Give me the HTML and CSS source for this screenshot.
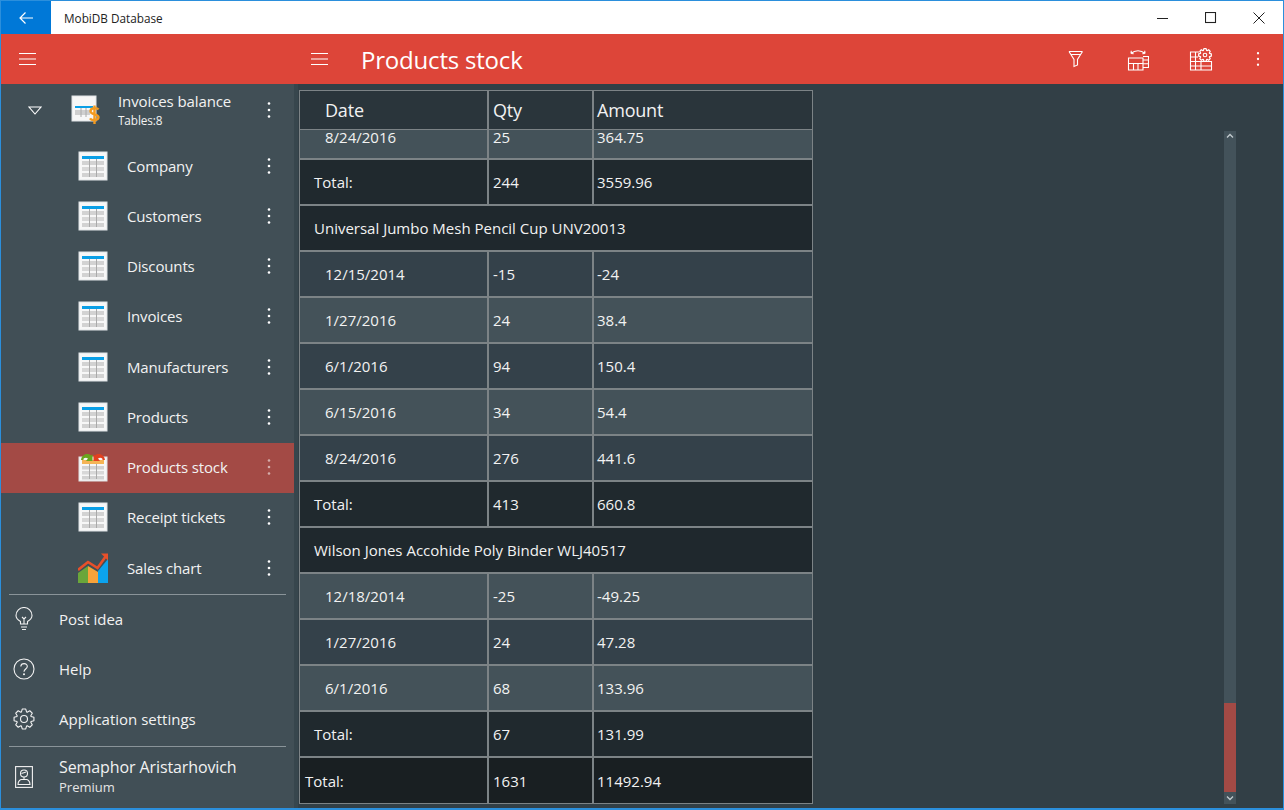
FILE: index.html
```html
<!DOCTYPE html>
<html lang="en">
<head>
<meta charset="utf-8">
<title>MobiDB Database</title>
<link rel="stylesheet" href="styles.css">
</head>
<body>
<svg class="defs" width="0" height="0" aria-hidden="true">
  <symbol id="dots" viewBox="0 0 4 18"><circle cx="2" cy="2.500" r="1.300"/><circle cx="2" cy="9" r="1.300"/><circle cx="2" cy="15.500" r="1.300"/></symbol>
  <symbol id="burger" viewBox="0 0 17 14"><path d="M0 1.500h17M0 7h17M0 12.500h17" fill="none" stroke="currentColor" stroke-width="1.200"/></symbol>
  <symbol id="tbl" viewBox="0 0 30 30">
    <rect x="1" y="1" width="28" height="28" fill="#f7f7f7" stroke="#dfe3e5"/>
    <rect x="4" y="5" width="22" height="3" fill="#0a9fe6"/>
    <rect x="4" y="10" width="22" height="4" fill="#d2d2d2"/>
    <rect x="4" y="16" width="22" height="4" fill="#d8d8d8"/>
    <rect x="4" y="22" width="22" height="4" fill="#d2d2d2"/>
    <path d="M11.500 8v18M18.500 8v18" stroke="#aaa" stroke-width="1"/>
  </symbol>
  <symbol id="gear" viewBox="0 0 24 24"><path fill="none" stroke-linejoin="round" d="M9.200 4.290 10.090 1.170H13.910L14.800 4.290 15.470 4.570 18.310 2.990 21.010 5.690 19.430 8.530 19.710 9.200 22.830 10.090V13.910L19.710 14.800 19.430 15.470 21.010 18.310 18.310 21.010 15.470 19.430 14.800 19.710 13.910 22.830H10.090L9.200 19.710 8.530 19.430 5.690 21.010 2.990 18.310 4.570 15.470 4.290 14.800 1.170 13.910V10.090L4.290 9.200 4.570 8.530 2.990 5.690 5.690 2.990 8.530 4.570Z"/></symbol>
</svg>
<div class="window">
  <header class="titlebar">
    <button class="back"><svg width="16" height="14" viewBox="0 0 16 14"><path d="M15 7H2M7.500 1.500 2 7l5.500 5.500" fill="none" stroke="#fff" stroke-width="1.200"/></svg></button>
    <span class="apptitle">MobiDB Database</span>
    <div class="winctl">
      <svg width="12" height="12" viewBox="0 0 12 12"><path d="M0 6.500h11" stroke="#222" stroke-width="1"/></svg>
      <svg width="12" height="12" viewBox="0 0 12 12"><rect x=".5" y=".5" width="10" height="10" fill="none" stroke="#222" stroke-width="1.100"/></svg>
      <svg width="12" height="12" viewBox="0 0 12 12"><path d="M.5.500l11 11M11.500.500l-11 11" stroke="#222" stroke-width="1"/></svg>
    </div>
  </header>
  <div class="toolbar">
    <div class="tb-left"><svg class="burger"><use href="#burger"/></svg></div>
    <div class="tb-main">
      <svg class="burger"><use href="#burger"/></svg>
      <h1 class="pagetitle">Products stock</h1>
      <div class="tb-actions">
        <svg width="18" height="20" viewBox="0 0 18 20" fill="none" stroke="#fff" stroke-width="1.100"><path d="M2 2.500h13.500M2 2.500l5 8v7l3.500-1.500v-5.500l5-8M3.800 5.500h10"/></svg>
        <svg class="swap" width="22" height="23" viewBox="0 0 22 23" fill="none" stroke="#fff" stroke-width="1.100"><path d="M4 5.500C8 1.800 14 1.800 18 5.500M4 5.500l.3-2.700M4 5.500l2.700.2M18 5.500l-.3-2.700M18 5.500l-2.700.2"/><path d="M1.500 10h14.500v12H1.500zM1.500 15.500H16M6.500 15.500V22M11 15.500V22M16 8.500H21.500v11H16M16 12h5.500M16 15.800h5.500"/></svg>
        <svg class="tblgear" width="24" height="23" viewBox="0 0 24 23" fill="none" stroke="#fff" stroke-width="1.100"><path d="M10 4H1.500v18h21v-9M1.500 9H9M1.500 13.500h21M1.500 18h21M6.500 4v18M12 13.500V22"/><use href="#gear" x="9" y="0" width="14" height="14" stroke-width="2.100"/><circle cx="16" cy="7" r="1.800"/></svg>
        <svg class="dots"><use href="#dots"/></svg>
      </div>
    </div>
  </div>
  <div class="content">
    <aside class="sidebar">
      <div class="db">
        <svg class="caret" width="14" height="9" viewBox="0 0 14 9"><path d="M1 1h12L7 8z" fill="none" stroke="#fff" stroke-width="1.100"/></svg>
        <svg class="dbicon" width="30" height="30" viewBox="0 0 30 30">
          <rect x="1" y="1" width="24" height="25" fill="#f7f7f7" stroke="#dfe3e5"/>
          <rect x="4" y="11" width="18" height="2" fill="#0a9fe6"/>
          <rect x="4" y="15" width="15" height="5" fill="#cfcfcf"/>
          <path d="M10 13v9M15 13v9" stroke="#aaa"/>
          <path d="M27.500 14.500c-1.500-2-8-2-8 1.800s8 2.500 8 6c0 3.500-7 3.500-8.500 1M23.500 10.500v18.500" fill="none" stroke="#f39a1f" stroke-width="2.400"/>
        </svg>
        <div class="dbtext"><div class="dbname">Invoices balance</div><div class="dbsub">Tables:8</div></div>
        <svg class="dots"><use href="#dots"/></svg>
      </div>
      <nav class="tables">
        <div class="item"><svg class="ticon"><use href="#tbl"/></svg><span class="label">Company</span><svg class="dots"><use href="#dots"/></svg></div>
        <div class="item"><svg class="ticon"><use href="#tbl"/></svg><span class="label">Customers</span><svg class="dots"><use href="#dots"/></svg></div>
        <div class="item"><svg class="ticon"><use href="#tbl"/></svg><span class="label">Discounts</span><svg class="dots"><use href="#dots"/></svg></div>
        <div class="item"><svg class="ticon"><use href="#tbl"/></svg><span class="label">Invoices</span><svg class="dots"><use href="#dots"/></svg></div>
        <div class="item"><svg class="ticon"><use href="#tbl"/></svg><span class="label">Manufacturers</span><svg class="dots"><use href="#dots"/></svg></div>
        <div class="item"><svg class="ticon"><use href="#tbl"/></svg><span class="label">Products</span><svg class="dots"><use href="#dots"/></svg></div>
        <div class="item selected">
          <svg class="ticon" viewBox="0 0 30 30">
            <rect x="1" y="5" width="28" height="24" fill="#f7f7f7" stroke="#dfe3e5"/>
            <rect x="4" y="8" width="22" height="4" fill="#f5b455"/>
            <rect x="4" y="14" width="22" height="3.500" fill="#d2d2d2"/>
            <rect x="4" y="19" width="22" height="3.500" fill="#d8d8d8"/>
            <rect x="4" y="24" width="22" height="3.500" fill="#d2d2d2"/>
            <path d="M11.500 12v15M18.500 12v15" stroke="#aaa"/>
            <path d="M3 8c.5-5 6-8 10-4.500l1.500-1V9H8l2-2.500C8 5 5 6 5.500 8z" fill="#6aa51e"/>
            <path d="M27 8c-.5-5-6-8-10-4.500l-1.500-1V9H22l-2-2.500C22 5 25 6 24.500 8z" fill="#e2401f"/>
          </svg>
          <span class="label">Products stock</span><svg class="dots"><use href="#dots"/></svg>
        </div>
        <div class="item"><svg class="ticon"><use href="#tbl"/></svg><span class="label">Receipt tickets</span><svg class="dots"><use href="#dots"/></svg></div>
        <div class="item">
          <svg class="ticon" viewBox="0 0 30 30">
            <path d="M0 20 10 13v17H0z" fill="#6aa63a"/>
            <path d="M10 13l10 6V30H10z" fill="#f7a33a"/>
            <path d="M20 18 30 6v24H20z" fill="#0ba3ee"/>
            <path d="M0 17 10 9l9.500 6L28 3" fill="none" stroke="#e8502a" stroke-width="2.600"/>
            <path d="M23 .5h7v7z" fill="#e8502a"/>
          </svg>
          <span class="label">Sales chart</span><svg class="dots"><use href="#dots"/></svg>
        </div>
      </nav>
      <div class="links">
        <div class="link">
          <svg class="licon" width="20" height="24" viewBox="0 0 20 24" fill="none" stroke="#f2f2f2" stroke-width="1.100"><path d="M6.500 17v-2.500C4 13 2 11 2 8.500a8 8 0 0 1 16 0c0 2.500-2 4.500-4.500 6V17zM7 20h6M8 22.500h4M8 10l2 2 2-2M10 12v5"/></svg>
          <span>Post idea</span>
        </div>
        <div class="link">
          <svg class="licon" width="22" height="22" viewBox="0 0 22 22" fill="none" stroke="#f2f2f2" stroke-width="1.100"><circle cx="11" cy="11" r="10"/><path d="M7.800 8.500C8 4.500 14.500 4.800 14.300 8.500c-.1 2.500-3.300 2.500-3.300 5.200"/><circle cx="11" cy="16.300" r=".5"/></svg>
          <span>Help</span>
        </div>
        <div class="link">
          <svg class="licon" width="22" height="22" viewBox="0 0 24 24" fill="none" stroke="#f2f2f2" stroke-width="1.200"><use href="#gear"/><circle cx="12" cy="12" r="3.800"/></svg>
          <span>Application settings</span>
        </div>
      </div>
      <div class="user">
        <svg class="licon" width="18" height="22" viewBox="0 0 18 22" fill="none" stroke="#f2f2f2" stroke-width="1.100"><rect x=".6" y=".6" width="16.800" height="20.800"/><circle cx="9" cy="7.500" r="3.500"/><path d="M6.500 7.500 11 6M9 11v2M3 18.500c0-3.500 2.500-5 3.500-5h5c1 0 3.500 1.500 3.500 5z"/></svg>
        <div><div class="uname">Semaphor Aristarhovich</div><div class="uplan">Premium</div></div>
      </div>
    </aside>
    <main class="main">
      <section class="grid">
        <div class="row head"><div class="c date">Date</div><div class="c">Qty</div><div class="c">Amount</div></div>
        <div class="row odd cut"><div class="c date">8/24/2016</div><div class="c">25</div><div class="c">364.75</div></div>
        <div class="row total"><div class="c sub">Total:</div><div class="c">244</div><div class="c">3559.96</div></div>
        <div class="row group"><div class="c sub wide">Universal Jumbo Mesh Pencil Cup UNV20013</div></div>
        <div class="row even"><div class="c date">12/15/2014</div><div class="c">-15</div><div class="c">-24</div></div>
        <div class="row odd"><div class="c date">1/27/2016</div><div class="c">24</div><div class="c">38.4</div></div>
        <div class="row even"><div class="c date">6/1/2016</div><div class="c">94</div><div class="c">150.4</div></div>
        <div class="row odd"><div class="c date">6/15/2016</div><div class="c">34</div><div class="c">54.4</div></div>
        <div class="row even"><div class="c date">8/24/2016</div><div class="c">276</div><div class="c">441.6</div></div>
        <div class="row total"><div class="c sub">Total:</div><div class="c">413</div><div class="c">660.8</div></div>
        <div class="row group"><div class="c sub wide">Wilson Jones Accohide Poly Binder WLJ40517</div></div>
        <div class="row odd"><div class="c date">12/18/2014</div><div class="c">-25</div><div class="c">-49.25</div></div>
        <div class="row even"><div class="c date">1/27/2016</div><div class="c">24</div><div class="c">47.28</div></div>
        <div class="row odd"><div class="c date">6/1/2016</div><div class="c">68</div><div class="c">133.96</div></div>
        <div class="row total"><div class="c sub">Total:</div><div class="c">67</div><div class="c">131.99</div></div>
        <div class="row grand"><div class="c first">Total:</div><div class="c">1631</div><div class="c">11492.94</div></div>
      </section>
      <div class="scrollbar">
        <svg class="arrow" width="12" height="10" viewBox="0 0 12 10"><path d="M3 6.500l3-3 3 3" fill="none" stroke="#c3cbcf" stroke-width="1.300"/></svg>
        <div class="track"></div>
        <div class="thumb"></div>
        <svg class="arrow" width="12" height="12" viewBox="0 0 12 12"><path d="M3 4.500l3 3 3-3" fill="none" stroke="#c3cbcf" stroke-width="1.300"/></svg>
      </div>
    </main>
  </div>
</div>
</body>
</html>
```

FILE: styles.css
```css
* { box-sizing: border-box; }
html, body { margin: 0; padding: 0; }
body { width: 1284px; height: 810px; overflow: hidden; font-family: "Open Sans", "Noto Sans", sans-serif; color: #f2f2f2; }
.defs { position: absolute; }
.window { width: 1284px; height: 810px; display: flex; flex-direction: column; border: 1px solid #2b8fdc; border-bottom-width: 2px; background: #323f46; }

.titlebar { height: 33px; flex: none; display: flex; align-items: center; background: #fff; }
.back { width: 50px; height: 33px; border: 0; padding: 0; background: #0078d7; display: flex; align-items: center; justify-content: center; }
.apptitle { margin-left: 13px; font-size: 11.750px; color: #222; }
.winctl { margin-left: auto; display: flex; gap: 36px; padding-right: 18px; }

.toolbar { height: 50px; flex: none; display: flex; background: #dd4539; color: #fff; }
.tb-left { width: 297px; padding-left: 18px; display: flex; align-items: center; }
.tb-main { flex: 1; display: flex; align-items: center; padding-left: 13px; }
.burger { width: 17px; height: 14px; color: #fff; }
.pagetitle { margin: 0 0 0 33px; font-size: 24px; font-weight: 400; letter-spacing: -.2px; color: #fff; }
.tb-actions { margin-left: auto; display: flex; align-items: center; gap: 40px; padding-right: 23px; }
.swap { margin-left: 2px; }
.dots { width: 4px; height: 18px; fill: #fff; flex: none; }
.tb-actions .dots { height: 16px; margin-left: 3px; }

.content { flex: 1; display: flex; min-height: 0; }
.sidebar { width: 293px; flex: none; display: flex; flex-direction: column; background: #414f56; }
.db { height: 58px; flex: none; display: flex; align-items: center; padding: 0 23px 6px 27px; }
.caret { margin-right: 29px; flex: none; }
.dbicon { flex: none; margin-right: 17px; }
.dbtext { flex: 1; }
.dbname { font-size: 15px; line-height: 20px; letter-spacing: -.1px; }
.dbsub { font-size: 11.750px; line-height: 19px; letter-spacing: -.1px; }

.tables { margin-top: -1px; padding-bottom: 1px; }
.item { height: 50.270px; display: flex; align-items: center; padding: 0 23px 1px 77px; }
.ticon { width: 30px; height: 30px; flex: none; margin-right: 19px; }
.label { flex: 1; font-size: 15px; letter-spacing: -.15px; }
.item.selected { background: #a34a45; }
.item.selected .dots { opacity: .55; }

.links { margin: 0 8px; border-top: 1px solid #8a9499; border-bottom: 1px solid #8a9499; }
.link { height: 50.170px; display: flex; align-items: center; font-size: 15px; padding: 0 0 3px 4px; }
.licon { flex: none; width: 22px; margin-right: 24px; }
.user { flex: 1; display: flex; align-items: center; padding-left: 12px; }
.uname { font-size: 16px; line-height: 21px; letter-spacing: -.1px; }
.uplan { font-size: 13px; line-height: 19px; color: #e4e4e4; }

.main { flex: 1; display: flex; padding-left: 5px; background: #323f46; box-shadow: inset 4px 0 0 #37464d; }
.grid { width: 514px; flex: none; margin-top: 6px; height: 714px; overflow: hidden; border: 1px solid #7c8386; }
.row { height: 46px; display: grid; grid-template-columns: 187px 105px 1fr; border-bottom: 2px solid #7c8386; font-size: 15px; }
.c { display: flex; align-items: center; padding-left: 4px; border-left: 2px solid #7c8386; overflow: hidden; white-space: nowrap; }
.c:last-child { padding-left: 3px; }
.c.date { padding-left: 25px; border-left: 0; }
.c.sub { padding-left: 14px; border-left: 0; }
.c.first { padding-left: 5px; border-left: 0; }
.c.wide { grid-column: 1 / -1; }
.head { height: 39px; background: #2a353b; border-bottom-width: 1px; font-size: 18px; letter-spacing: -.2px; }
.cut { height: 30px; }
.cut .c { align-items: flex-start; overflow: visible; line-height: 14px; }
.odd { background: #445259; }
.even { background: #34414a; }
.total { background: #20292e; }
.group { background: #1f282d; }
.grand { background: #191f22; border-bottom: 0; }

.scrollbar { width: 12px; flex: none; margin: 47px 0 0 411px; height: 673px; display: flex; flex-direction: column; background: #43525a; }
.arrow { flex: none; }
.track { flex: 1; }
.thumb { height: 89px; flex: none; background: #a34a45; }
```
